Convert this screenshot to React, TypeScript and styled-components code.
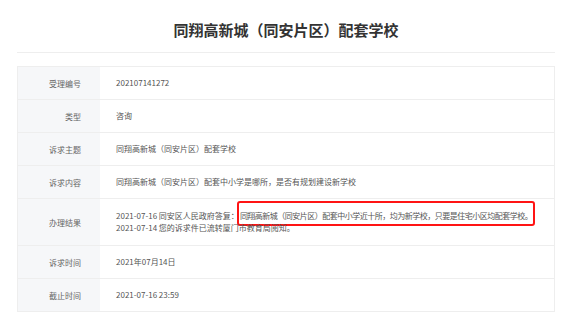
import React from 'react';
import styled, { createGlobalStyle } from 'styled-components';

const GlobalStyle = createGlobalStyle`
  html, body {
    margin: 0;
    padding: 0;
    background: #ffffff;
    font-family: "Noto Sans CJK SC", "Noto Sans", sans-serif;
    -webkit-font-smoothing: antialiased;
  }
`;

const Page = styled.div`
  width: 572px;
  padding: 0 17px;
  box-sizing: border-box;
`;

const Title = styled.h1`
  margin: 0;
  padding: 20px 0 12px;
  font-size: 15px;
  line-height: 20px;
  font-weight: 700;
  color: #333333;
  text-align: center;
  border-bottom: 1px solid #eeeeee;
`;

const Table = styled.div`
  margin-top: 13px;
  border: 1px solid #eeeeee;
`;

const Row = styled.div<{ $tall?: boolean }>`
  display: grid;
  grid-template-columns: 82px 1fr;
  height: ${(p) => (p.$tall ? 46 : 32)}px;
  border-bottom: 1px solid #eeeeee;

  &:last-child {
    border-bottom: none;
  }
`;

const Label = styled.div`
  display: flex;
  align-items: center;
  justify-content: flex-end;
  padding-right: 19px;
  background: #f6f7f9;
  font-size: 8px;
  color: #666666;
`;

const Value = styled.div`
  display: flex;
  flex-direction: column;
  justify-content: center;
  padding-left: 16px;
  font-size: 8px;
  line-height: 12px;
  color: #555555;
  white-space: nowrap;
`;

const Marked = styled.span`
  padding: 7px 1px 3px;
  margin-left: -2px;
  border: 2px solid #ff1414;
  border-radius: 3px;
  letter-spacing: -0.5px;
`;

const rows: { label: string; value: React.ReactNode; tall?: boolean }[] = [
  { label: '受理编号', value: '202107141272' },
  { label: '类型', value: '咨询' },
  { label: '诉求主题', value: '同翔高新城（同安片区）配套学校' },
  { label: '诉求内容', value: '同翔高新城（同安片区）配套中小学是哪所，是否有规划建设新学校' },
  {
    label: '办理结果',
    tall: true,
    value: (
      <>
        <div>
          2021-07-16 同安区人民政府答复：
          <Marked>同翔高新城（同安片区）配套中小学近十所，均为新学校，只要是住宅小区均配套学校。</Marked>
        </div>
        <div>2021-07-14 您的诉求件已流转厦门市教育局阅知。</div>
      </>
    ),
  },
  { label: '诉求时间', value: '2021年07月14日' },
  { label: '截止时间', value: '2021-07-16 23:59' },
];

export default function App() {
  return (
    <>
      <GlobalStyle />
      <Page>
        <Title>同翔高新城（同安片区）配套学校</Title>
        <Table>
          {rows.map((r) => (
            <Row key={r.label} $tall={r.tall}>
              <Label>{r.label}</Label>
              <Value>{r.value}</Value>
            </Row>
          ))}
        </Table>
      </Page>
    </>
  );
}
